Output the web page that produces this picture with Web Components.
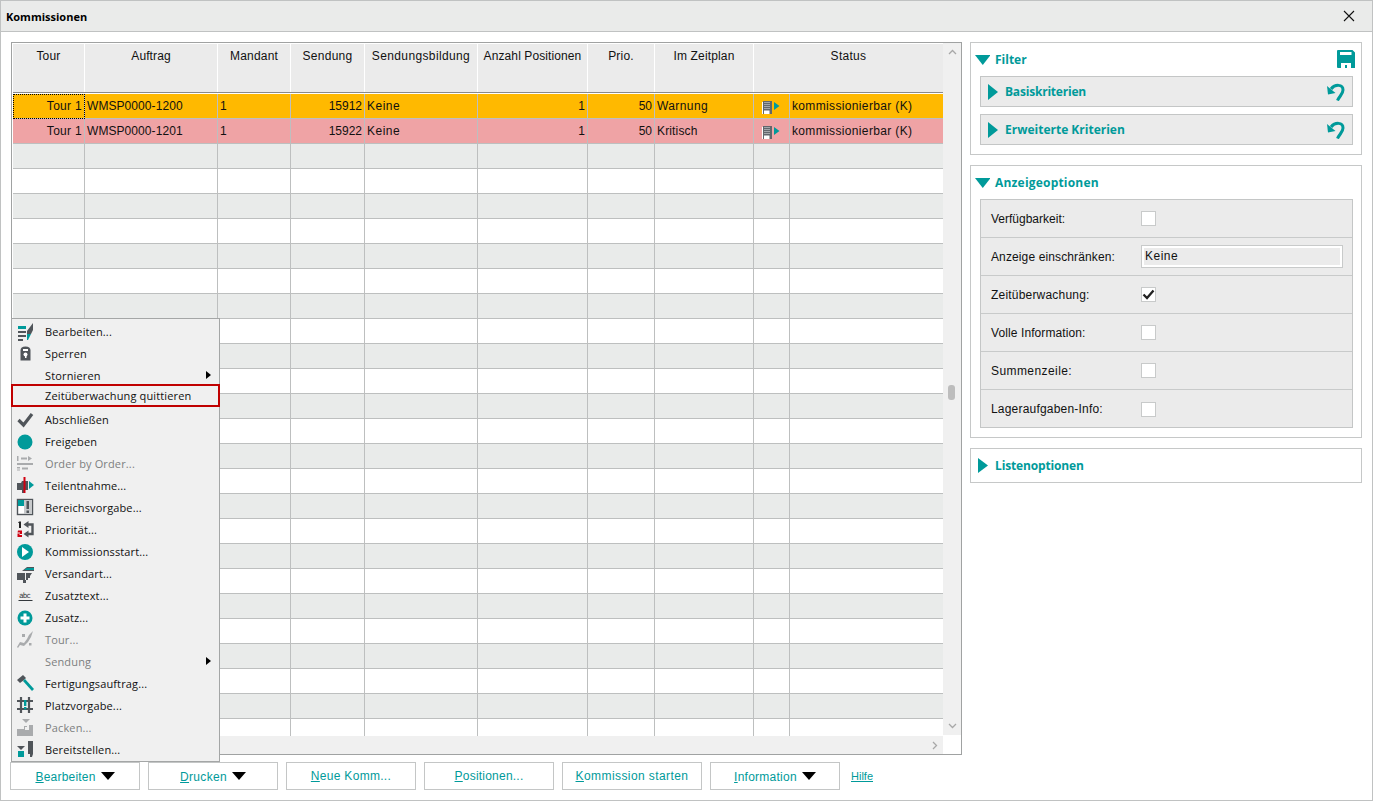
<!DOCTYPE html>
<html lang="de">
<head>
<meta charset="utf-8">
<title>Kommissionen</title>
<style>
html,body{margin:0;padding:0;background:#fff;}
body{font-family:"Liberation Sans",Arial,sans-serif;font-size:12px;color:#111;}
</style>
</head>
<body>
<app-window>
  <title-bar slot="title">Kommissionen</title-bar>
  <div slot="left" style="display:contents">
    <data-grid></data-grid>
    <button-bar>
      <action-button wide-arrow width="130" style="letter-spacing:.2px"><u>B</u>earbeiten</action-button>
      <action-button wide-arrow width="130" style="letter-spacing:.3px"><u>D</u>rucken</action-button>
      <action-button width="130" style="letter-spacing:.3px"><u>N</u>eue Komm...</action-button>
      <action-button width="130" style="letter-spacing:.22px"><u>P</u>ositionen...</action-button>
      <action-button width="140"><u>K</u>ommission starten</action-button>
      <action-button wide-arrow width="130" style="letter-spacing:.25px"><u>I</u>nformation</action-button>
      <help-link>Hilfe</help-link>
    </button-bar>
    <context-menu>
      <menu-item icon="edit">Bearbeiten...</menu-item>
      <menu-item icon="lock">Sperren</menu-item>
      <menu-item submenu>Stornieren</menu-item>
      <menu-item marked>Zeitüberwachung quittieren</menu-item>
      <menu-item icon="check">Abschließen</menu-item>
      <menu-item icon="dot">Freigeben</menu-item>
      <menu-item icon="order" disabled>Order by Order...</menu-item>
      <menu-item icon="part">Teilentnahme...</menu-item>
      <menu-item icon="area">Bereichsvorgabe...</menu-item>
      <menu-item icon="prio">Priorität...</menu-item>
      <menu-item icon="play">Kommissionsstart...</menu-item>
      <menu-item icon="truck">Versandart...</menu-item>
      <menu-item icon="abc">Zusatztext...</menu-item>
      <menu-item icon="plus">Zusatz...</menu-item>
      <menu-item icon="tour" disabled>Tour...</menu-item>
      <menu-item submenu disabled>Sendung</menu-item>
      <menu-item icon="hammer">Fertigungsauftrag...</menu-item>
      <menu-item icon="place">Platzvorgabe...</menu-item>
      <menu-item icon="pack" disabled>Packen...</menu-item>
      <menu-item icon="provide">Bereitstellen...</menu-item>
    </context-menu>
  </div>
  <div slot="right" style="display:contents">
    <side-panel open save height="113" label="Filter">
      <sub-panel label="Basiskriterien" style="letter-spacing:-.2px"></sub-panel>
      <sub-panel label="Erweiterte Kriterien"></sub-panel>
    </side-panel>
    <side-panel open height="273" label="Anzeigeoptionen" style="letter-spacing:.2px">
      <option-table>
        <option-row label="Verfügbarkeit:" style="letter-spacing:0"><check-box></check-box></option-row>
        <option-row label="Anzeige einschränken:" style="letter-spacing:.12px"><text-field>Keine</text-field></option-row>
        <option-row label="Zeitüberwachung:" style="letter-spacing:.2px"><check-box checked></check-box></option-row>
        <option-row label="Volle Information:" style="letter-spacing:.1px"><check-box></check-box></option-row>
        <option-row label="Summenzeile:" style="letter-spacing:.42px"><check-box></check-box></option-row>
        <option-row label="Lageraufgaben-Info:" style="letter-spacing:.2px"><check-box></check-box></option-row>
      </option-table>
    </side-panel>
    <side-panel height="35" label="Listenoptionen" style="letter-spacing:-.15px"></side-panel>
  </div>
</app-window>

<script>
const TEAL='#009a9a', DARK='#50555a', DIS='#a9abad';
const ICONS={
edit:`<rect x="2" y="3" width="8" height="3" fill="${TEAL}"/><rect x="2" y="8" width="8" height="2" fill="${DARK}"/><rect x="2" y="12" width="8" height="2" fill="${DARK}"/><rect x="2" y="16" width="5" height="2" fill="${DARK}"/><path d="M17 0v7l-2 4h-4V8z" fill="${DARK}"/><path d="M11 11h4l-3 6h-1z" fill="${TEAL}"/>`,
lock:`<path d="M4.500 15.500V5.500Q4.500 1.500 9.500 1.500T14.500 5.500V15.500Z" fill="${DARK}"/><rect x="7" y="4" width="5" height="2" fill="#fff"/><circle cx="9.500" cy="9.500" r="2" fill="#fff"/><rect x="9" y="10" width="1.500" height="3" fill="#fff"/>`,
check:`<path d="M2.500 9L7.500 14L16 3" fill="none" stroke="${DARK}" stroke-width="3.200"/>`,
dot:`<circle cx="9" cy="9" r="7.500" fill="${TEAL}"/>`,
order:`<rect x="1" y="1" width="1.500" height="5" fill="${DIS}"/><rect x="5" y="2.500" width="6" height="2" fill="${DIS}"/><path d="M12 1l4 2.500-4 2.500z" fill="${DIS}"/><rect x="1" y="8" width="16" height="2" fill="${DIS}"/><path d="M1 12h3v1.500h-3v1h3v1h-3z" fill="${DIS}"/><rect x="6" y="12.500" width="6" height="2" fill="${DIS}"/>`,
part:`<path d="M1 6h4l1-2 3 0v12h-3v-3h-5z" fill="${DARK}"/><rect x="9" y="4" width="3" height="9" fill="${DARK}"/><rect x="7.500" y="0" width="2" height="16" fill="#d00010"/><path d="M13 4l5 4-5 4z" fill="${TEAL}"/>`,
area:`<rect x="1.500" y="0.500" width="15" height="15" fill="#fff" stroke="${DARK}" stroke-width="1.400"/><rect x="2" y="1" width="6" height="6" fill="${TEAL}"/><rect x="8" y="1" width="8" height="14" fill="#c8cacc"/><rect x="10.500" y="2" width="2.500" height="8" fill="${DARK}"/><rect x="10.500" y="11.500" width="2.500" height="2.500" fill="${DARK}"/>`,
prio:`<path d="M3 0.500h2v6.500h-2v-5h-1z" fill="#222"/><path d="M2 9.500h4v3.500h-2.500v1h2.500v2h-4.500v-3.500h2.500v-1h-2.500z" fill="#d00010"/><path d="M11.500 3.500h5v9.500h-5" fill="none" stroke="${DARK}" stroke-width="2.400"/><path d="M7.500 3.500l5-3.500v7z" fill="${DARK}"/><path d="M7.500 13l5-3.500v7z" fill="${DARK}"/>`,
play:`<circle cx="9" cy="9" r="8" fill="${TEAL}"/><path d="M6 4l7 5-7 5z" fill="#fff"/>`,
truck:`<path d="M6 6l5-4h7v4z" fill="${DARK}"/><path d="M8 5l3-2h7v2z" fill="${TEAL}"/><rect x="1" y="8" width="8" height="7" fill="${DARK}"/><path d="M10 8h6l-2 3v2h-2v2h-2z" fill="${DARK}"/><rect x="7" y="15" width="3" height="3" fill="${DARK}"/>`,
abc:`<text x="3" y="10.500" font-family="'DejaVu Sans Mono',monospace" font-size="7.500" fill="#33383c" textLength="12">abc</text><rect x="2.500" y="13" width="14" height="1" fill="#33383c"/>`,
plus:`<circle cx="9" cy="9" r="7.500" fill="${TEAL}"/><rect x="4.500" y="7.500" width="9" height="3" fill="#fff"/><rect x="7.500" y="4.500" width="3" height="9" fill="#fff"/>`,
tour:`<path d="M1 16l3-5 4 1 3-4 2-4 4-4-2 6-3 5-4 4-4-1-2 3z" fill="${DIS}"/><rect x="6" y="3" width="3" height="3" fill="${DIS}"/><rect x="13" y="12" width="2.500" height="2.500" fill="${DIS}"/>`,
hammer:`<path d="M1 5l6-5 3 3-2 2-4 3z" fill="${DARK}"/><path d="M7 6l2-2 9 10-2 2z" fill="${TEAL}"/>`,
place:`<path d="M1 4h16M1 12h16M5 0v16M13 0v16" stroke="${DARK}" stroke-width="2.200" fill="none"/><rect x="8" y="3" width="2.400" height="6" fill="${TEAL}"/><rect x="8" y="10" width="2.400" height="2.400" fill="${TEAL}"/>`,
pack:`<path d="M6 0h8l-4 4z" fill="${DIS}"/><path d="M1 10h7v-3h3v2h2v-3h4v11h-16z" fill="${DIS}"/><rect x="9" y="8" width="4" height="3" fill="#f0f0f0"/>`,
provide:`<path d="M1 5h8l-4 4z" fill="${DARK}"/><rect x="2" y="10" width="6" height="6" fill="${TEAL}"/><path d="M12 0h5v13l-1 3h-2v-3h-2z" fill="${DARK}"/>`
};

function def(name, css, html, init){
  customElements.define(name, class extends HTMLElement{
    constructor(){
      super();
      this.attachShadow({mode:'open'});
    }
    connectedCallback(){
      if(this._i) return;
      this._i=1;
      this.shadowRoot.innerHTML=`<style>${css}</style>${typeof html==='function'?html(this):html}`;
      if(init) init(this,this.shadowRoot);
    }
  });
}

def('app-window',`
:host{display:flex;flex-direction:column;box-sizing:border-box;width:1373px;height:801px;border:1px solid #c0c2c2;background:#fff;position:relative;overflow:hidden;}
.body{display:flex;gap:8px;padding:10px 10px 0 10px;flex:1;min-height:0;}
.left{display:flex;flex-direction:column;width:951px;position:relative;}
.right{display:flex;flex-direction:column;gap:10px;width:393px;}
`,`<slot name="title"></slot><div class="body"><div class="left"><slot name="left"></slot></div><div class="right"><slot name="right"></slot></div></div>`);

def('title-bar',`
:host{display:flex;align-items:center;justify-content:space-between;height:30px;box-sizing:content-box;background:#eaebea;border-bottom:1px solid #c0c2c2;padding:0 17px 0 5px;font:700 11px "Open Sans",sans-serif;color:#000;flex:none;}
svg{display:block}
`,`<span><slot></slot></span><svg width="12" height="12" viewBox="0 0 12 12"><path d="M1 1L11 11M11 1L1 11" stroke="#111" stroke-width="1.100" fill="none"/></svg>`);

const COLS=[72,133,73,74,113,110,67,99,36,153];
const HEAD=[['Tour',1,.2],['Auftrag',1,.1],['Mandant',1,.2],['Sendung',1,.3],['Sendungsbildung',1,.37],['Anzahl Positionen',1,.1],['Prio.',1,.2],['Im Zeitplan',1,.15],['Status',2,.3]];
const ROWS=[['#ffb900','Warnung',.4,['Tour 1','WMSP0000-1200','1','15912','Keine','1','50']],['#efa3a5','Kritisch',.15,['Tour 1','WMSP0000-1201','1','15922','Keine','1','50']]];
const BLD=`<svg width="17" height="14" viewBox="0 0 17 14"><rect x="0" y="0" width="9" height="13" fill="#62676c"/><path d="M1.500 1.500h5M1.500 3.500h5M1.500 5.500h5M1.500 7.500h5" stroke="#e4e6e8" stroke-width="1" stroke-dasharray="1 1"/><rect x="1" y="9.500" width="5.500" height="3.500" fill="#fff"/><rect x="-1" y="1" width="1" height="12" fill="#fff"/><path d="M11 1l5.500 4L11 9z" fill="${TEAL}"/></svg>`;
def('data-grid',`
:host{display:flex;box-sizing:border-box;height:713px;border:1px solid #a0a2a2;background:#fff;flex:none;}
.main{display:flex;flex-direction:column;width:930px;padding:1px 0 0 1px;flex:none;}
.head{display:grid;grid-template-columns:${COLS.map(c=>c+'px').join(' ')};height:48px;background:#ebebeb;border-bottom:1px solid #8a8a8a;margin-bottom:1px;flex:none;}
.head div{text-align:center;padding-top:5px;line-height:14px;border-right:1px solid #fff;box-sizing:border-box;white-space:nowrap;}
.head div:last-child{border-right:0}
.rows{flex:1;overflow:hidden;min-height:0;}
.row{display:grid;grid-template-columns:${COLS.map(c=>c+'px').join(' ')};height:25px;}
.row div{box-sizing:border-box;border-right:1px solid #bdbfbf;border-bottom:1px solid #bdbfbf;line-height:24px;padding:0 2px;white-space:nowrap;overflow:hidden;letter-spacing:.5px;position:relative;}
.row div.r{text-align:right;padding-right:2px;letter-spacing:0}
.row div.n{letter-spacing:.07px}
.row div:last-child{border-right:0;padding-left:2px;letter-spacing:.35px}
.row div.ic{padding:7px 0 0 9px;line-height:0;overflow:visible}
.row.g{background:#e9ebea}
.focus{outline:1px dotted #000;outline-offset:-1px}
.hs{height:18px;background:#f0f0f0;display:flex;justify-content:flex-end;align-items:center;padding-right:5px;flex:none;margin-left:-1px;}
.vs{width:18px;background:#f0f0f0;height:692px;margin-top:0;position:relative;display:flex;flex-direction:column;justify-content:space-between;align-items:center;padding:6px 0;box-sizing:border-box;}
.thumb{position:absolute;left:5px;top:342px;width:7px;height:15px;border-radius:3px;background:#bdbdbd;}
svg{display:block;overflow:visible}
`,(el)=>{
  const head=HEAD.map(h=>`<div style="grid-column:span ${h[1]};letter-spacing:${h[2]}px">${h[0]}</div>`).join('');
  let rows='';
  for(let i=0;i<26;i++){
    const d=ROWS[i];
    if(d){
      const v=d[3];
      rows+=`<div class="row" style="background:${d[0]}"><div class="r ${i==0?'focus':''}" style="letter-spacing:.3px">${v[0]}</div><div class="n">${v[1]}</div><div>${v[2]}</div><div class="r">${v[3]}</div><div>${v[4]}</div><div class="r">${v[5]}</div><div class="r">${v[6]}</div><div style="letter-spacing:${d[2]}px">${d[1]}</div><div class="ic">${BLD}</div><div>kommissionierbar (K)</div></div>`;
    } else {
      rows+=`<div class="row ${i%2==0?'g':''}">${COLS.map(()=>'<div></div>').join('')}</div>`;
    }
  }
  return `<div class="main"><div class="head">${head}</div><div class="rows">${rows}</div><div class="hs"><svg width="6" height="9" viewBox="0 0 6 9"><path d="M1 1l3.500 3.500L1 8" fill="none" stroke="#a8a8a8" stroke-width="1.300"/></svg></div></div>
  <div class="vs"><svg width="9" height="6" viewBox="0 0 9 6"><path d="M1 5l3.500-3.500L8 5" fill="none" stroke="#a8a8a8" stroke-width="1.300"/></svg><svg width="9" height="6" viewBox="0 0 9 6"><path d="M1 1l3.500 3.500L8 1" fill="none" stroke="#a8a8a8" stroke-width="1.300"/></svg><div class="thumb"></div></div>`;
});

def('button-bar',`
:host{display:flex;gap:8px;margin:7px 0 0 -1px;align-items:flex-start;}
`,`<slot></slot>`);

def('action-button',`
:host{display:flex;align-items:center;justify-content:center;gap:5px;box-sizing:border-box;height:28px;border:1px solid #c4c6c6;background:#fff;color:${TEAL};letter-spacing:.42px;flex:none;padding-bottom:1px;white-space:nowrap;}
:host([wide-arrow]){padding:1px 0 0 0;}
svg{display:block;margin-top:-1px}
`,(el)=>`<span><slot></slot></span>${el.hasAttribute('wide-arrow')?'<svg width="14" height="8" viewBox="0 0 14 8"><path d="M0 0h14L7 8z" fill="#000"/></svg>':''}`,
(el)=>{el.style.width=el.getAttribute('width')+'px';});

def('help-link',`
:host{display:block;color:${TEAL};text-decoration:underline;font-size:11px;line-height:28px;margin-left:3px;}
`,`<slot></slot>`);

def('context-menu',`
:host{position:absolute;left:0;top:276px;width:209px;box-sizing:border-box;border:1px solid #a4a6a6;background:#f0f0f0;padding:1px 0 0;height:444px;display:block;font:11px "Open Sans",sans-serif;color:#111;letter-spacing:.14px;}
`,`<slot></slot>`);

def('menu-item',`
:host{display:flex;align-items:center;height:22px;position:relative;box-sizing:border-box;padding-left:33px;white-space:nowrap;}
:host([disabled]){color:#7d7f80;}
:host([marked]) span{position:relative;top:-2px}
.ic{position:absolute;left:4px;top:3px;overflow:visible}
.sub{position:absolute;right:8px;top:7px;}
.mark{position:absolute;left:-1px;right:-1px;top:-2px;border:2px solid #c00000;box-sizing:border-box;height:23px;}
`,(el)=>{
  const ic=el.getAttribute('icon');
  return `${ic?`<svg class="ic" width="18" height="18" viewBox="0 0 18 18">${ICONS[ic]}</svg>`:''}<span><slot></slot></span>${el.hasAttribute('submenu')?'<svg class="sub" width="5" height="8" viewBox="0 0 5 8"><path d="M0 0l5 4-5 4z" fill="#000"/></svg>':''}${el.hasAttribute('marked')?'<div class="mark"></div>':''}`;
});

def('side-panel',`
:host{display:block;box-sizing:border-box;border:1px solid #c6c8c8;background:#fff;padding:0 8px 0 9px;flex:none;}
.h{display:flex;align-items:center;height:33px;font:700 12px "Open Sans",sans-serif;color:${TEAL};position:relative;margin-left:-5px;}
.tri{width:15px;height:10px;margin-right:5px;flex:none;display:block;}
.trir{width:10px;height:15px;margin:0 7px 0 3px;flex:none;display:block;}
.save{position:absolute;right:-2px;top:7px;}
.c{display:flex;flex-direction:column;gap:7px;letter-spacing:0}
`,(el)=>`<div class="h">${el.hasAttribute('open')?`<svg class="tri" viewBox="0 0 15 10"><path d="M0 0h15.500L7.750 10z" fill="${TEAL}"/></svg>`:`<svg class="trir" viewBox="0 0 10 15"><path d="M0 0l10 7.500L0 15z" fill="${TEAL}"/></svg>`}<span>${el.getAttribute('label')}</span>${el.hasAttribute('save')?`<svg class="save" width="18" height="18" viewBox="0 0 18 18"><path d="M1 0h14.500L18 2.500V18h-4v-5H4v5H1q-1 0-1-1V1q0-1 1-1z" fill="${TEAL}"/><rect x="3" y="2" width="11.500" height="3" fill="#fff"/><rect x="5" y="14" width="8" height="4" fill="#fff"/><rect x="8" y="15" width="2" height="3" fill="${TEAL}"/></svg>`:''}</div><div class="c"><slot></slot></div>`,
(el)=>{el.style.height=el.getAttribute('height')+'px';});

def('sub-panel',`
:host{display:flex;align-items:center;box-sizing:border-box;height:31px;border:1px solid #c4c6c6;background:#ebebeb;font:700 12px "Open Sans",sans-serif;color:${TEAL};padding:0 7px 0 7px;position:relative;}
.t{width:10px;height:16px;margin-right:7px;display:block;flex:none;}
.u{margin-left:auto;display:block;}
`,(el)=>`<svg class="t" viewBox="0 0 10 16"><path d="M0 0l10 8-10 8z" fill="${TEAL}"/></svg><span>${el.getAttribute('label')}</span><svg class="u" width="18" height="18" viewBox="0 0 18 18"><path d="M4 6C8 1 16 1 16 7C16 11 12.500 13 10.500 17.500" fill="none" stroke="${TEAL}" stroke-width="3"/><path d="M0 3l1 8.500 7.500-1.500z" fill="${TEAL}"/></svg>`);

def('option-table',`
:host{display:block;border:1px solid #c4c6c6;background:#ebebeb;box-sizing:border-box;height:229px;}
`,`<slot></slot>`);

def('option-row',`
:host{display:flex;align-items:center;box-sizing:border-box;height:38px;border-bottom:1px solid #c8caca;padding-left:10px;}
:host(:last-child){border-bottom:0}
.l{width:150px;flex:none;}
`,(el)=>`<div class="l">${el.getAttribute('label')}</div><slot></slot>`);

def('check-box',`
:host{display:block;width:15px;height:15px;box-sizing:border-box;border:1px solid #c8caca;background:#fff;}
svg{display:block}
`,(el)=>el.hasAttribute('checked')?`<svg width="13" height="13" viewBox="0 0 13 13"><path d="M1.500 6.500L5 10L11.500 2.500" fill="none" stroke="#222" stroke-width="2.300"/></svg>`:'');

def('text-field',`
:host{display:block;width:202px;height:23px;box-sizing:border-box;border:1px solid #c8caca;background:#ebebeb;box-shadow:inset 0 0 0 2px #fff;line-height:20px;padding:0 0 0 3px;letter-spacing:.5px;color:#111;}
`,`<slot></slot>`);
</script>
</body>
</html>
